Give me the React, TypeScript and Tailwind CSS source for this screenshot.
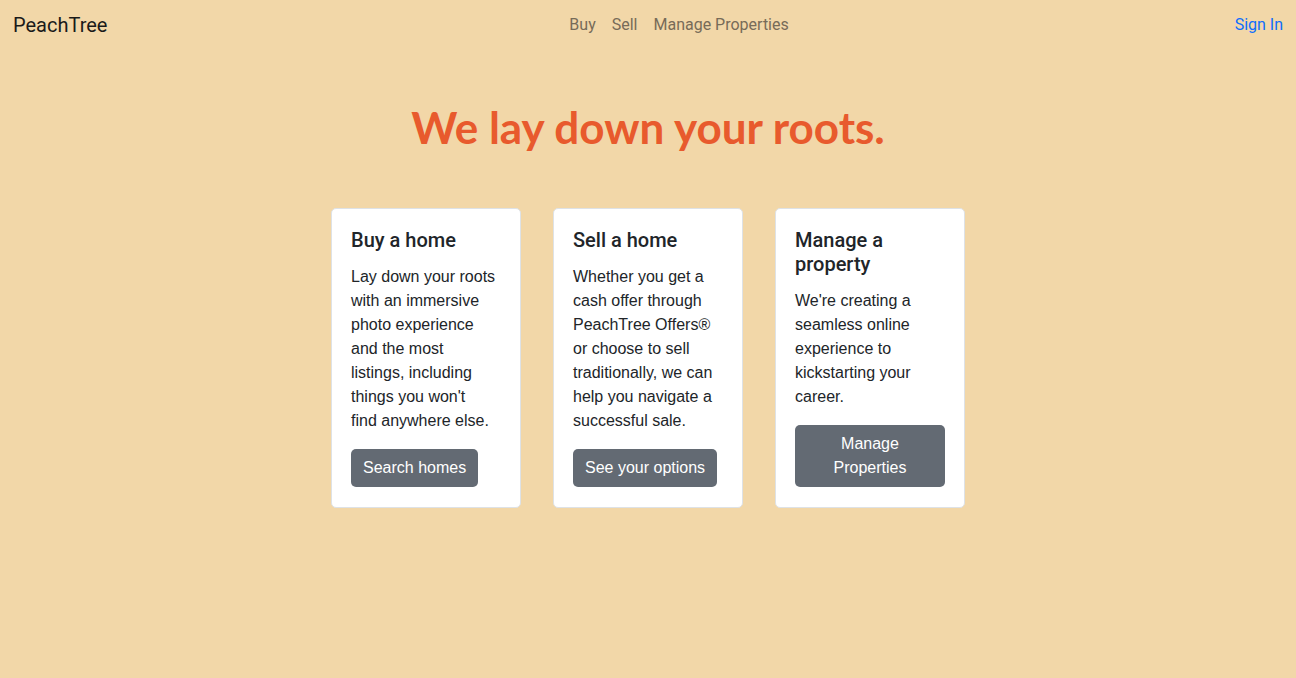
import React from "react";

const cards = [
  {
    title: "Buy a home",
    lines: [
      "Lay down your roots",
      "with an immersive",
      "photo experience",
      "and the most",
      "listings, including",
      "things you won't",
      "find anywhere else.",
    ],
    btn: "Search homes",
    full: false,
  },
  {
    title: "Sell a home",
    lines: [
      "Whether you get a",
      "cash offer through",
      "PeachTree Offers®",
      "or choose to sell",
      "traditionally, we can",
      "help you navigate a",
      "successful sale.",
    ],
    btn: "See your options",
    full: false,
  },
  {
    title: "Manage a property",
    lines: [
      "We're creating a",
      "seamless online",
      "experience to",
      "kickstarting your",
      "career.",
    ],
    btn: "Manage Properties",
    full: true,
  },
];

export default function App() {
  return (
    <div
      className="min-h-[678px] bg-[#f2d7a8] text-[#212529]"
      style={{ fontFamily: "'Liberation Sans', Arial, sans-serif" }}
    >
      <nav
        className="flex h-[48px] items-center px-[13px] pt-[2px]"
        style={{ fontFamily: "Roboto, 'Liberation Sans', sans-serif" }}
      >
        <a className="mr-4 text-[20px] leading-[30px] text-[#1a1a1a]">PeachTree</a>
        <div className="flex flex-1 justify-center">
          <a className="px-2 text-[16px] leading-6 text-[#776b58]">Buy</a>
          <a className="px-2 text-[16px] leading-6 text-[#776b58]">Sell</a>
          <a className="px-2 text-[16px] leading-6 text-[#776b58]">Manage Properties</a>
        </div>
        <a className="text-[16px] leading-6 text-[#0d6efd]">Sign In</a>
      </nav>
      <h1
        className="mt-[51px] text-center text-[44px] font-bold leading-[56px] text-[#e85a2d]"
        style={{ fontFamily: "Lato, 'Noto Sans', sans-serif" }}
      >
        We lay down your roots.
      </h1>
      <div className="mt-[53px] flex justify-center gap-[32px]">
        {cards.map((c) => (
          <div
            key={c.title}
            className="flex w-[190px] flex-col rounded-[5px] border border-[#dee2e6] bg-white px-[19px] pt-[19px] pb-[20px]"
          >
            <h5
              className="mb-[13px] text-[20px] font-medium leading-6"
              style={{ fontFamily: "Roboto, 'Liberation Sans', sans-serif" }}
            >
              {c.title}
            </h5>
            <p className="mb-4 text-[16px] leading-6">
              {c.lines.map((l) => (
                <span key={l} className="block whitespace-nowrap">
                  {l}
                </span>
              ))}
            </p>
            <button
              className={`${c.full ? "w-full" : "self-start"} rounded-[5px] bg-[#636a73] px-3 py-[7px] text-[16px] leading-6 text-white`}
            >
              {c.btn}
            </button>
          </div>
        ))}
      </div>
    </div>
  );
}
